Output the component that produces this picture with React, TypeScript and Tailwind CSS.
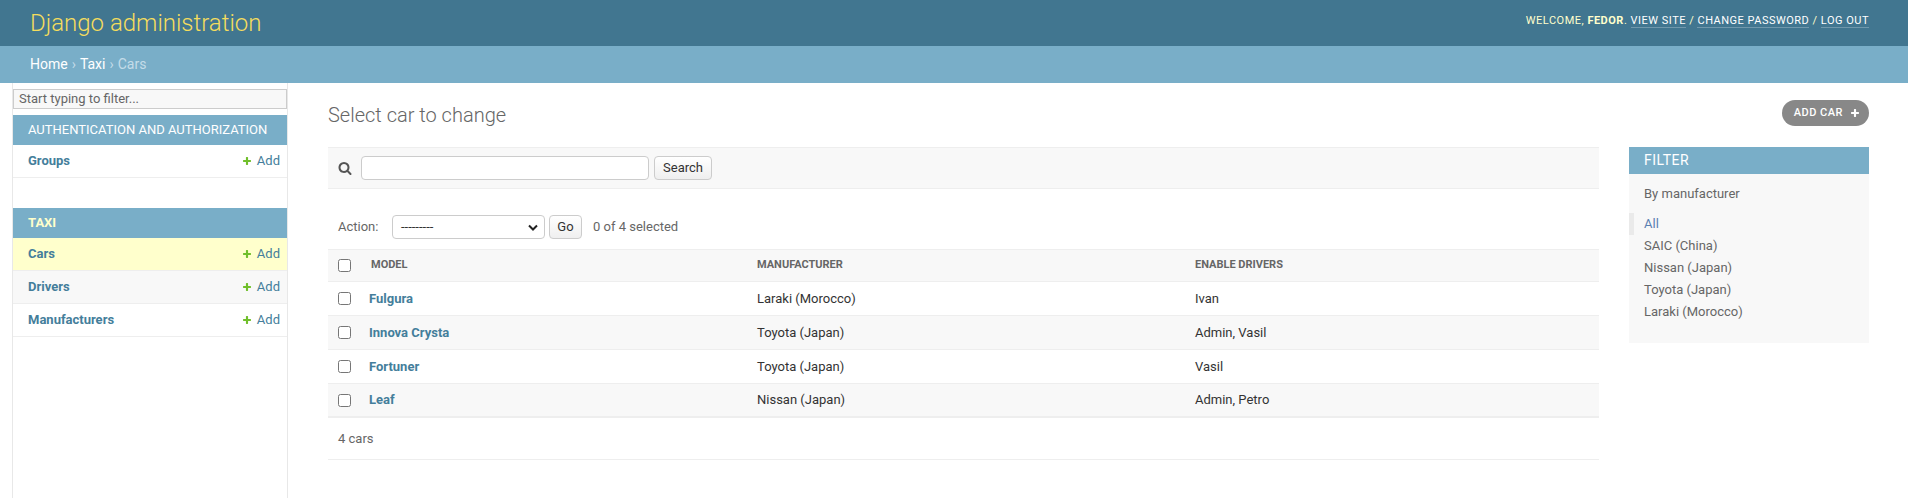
const PLUS =
  "M1600 796v192q0 40-28 68t-68 28h-416v416q0 40-28 68t-68 28h-192q-40 0-68-28t-28-68v-416h-416q-40 0-68-28t-28-68v-192q0-40 28-68t68-28h416v-416q0-40 28-68t68-28h192q40 0 68 28t28 68v416h416q40 0 68 28t28 68z";

function PlusIcon({ color, size = 10 }: { color: string; size?: number }) {
  return (
    <svg width={size} height={size} viewBox="0 0 1792 1792">
      <path d={PLUS} fill={color} />
    </svg>
  );
}

function SearchIcon() {
  return (
    <svg width="14" height="14" viewBox="0 0 1792 1792">
      <path
        fill="#555"
        d="M1216 832q0-185-131.5-316.5t-316.5-131.5-316.5 131.5-131.5 316.5 131.5 316.5 316.5 131.5 316.5-131.5 131.5-316.5zm512 832q0 52-38 90t-90 38q-54 0-90-38l-343-342q-179 124-399 124-143 0-273.5-55.5t-225-150-150-225-55.5-273.5 55.5-273.5 150-225 225-150 273.5-55.5 273.5 55.5 225 150 150 225 55.5 273.5q0 220-124 399l343 343q37 37 37 90z"
      />
    </svg>
  );
}

const cars = [
  { model: "Fulgura", manufacturer: "Laraki (Morocco)", drivers: "Ivan" },
  { model: "Innova Crysta", manufacturer: "Toyota (Japan)", drivers: "Admin, Vasil" },
  { model: "Fortuner", manufacturer: "Toyota (Japan)", drivers: "Vasil" },
  { model: "Leaf", manufacturer: "Nissan (Japan)", drivers: "Admin, Petro" },
];

const filters = ["SAIC (China)", "Nissan (Japan)", "Toyota (Japan)", "Laraki (Morocco)"];

function SidebarRow({ name, bg }: { name: string; bg: string }) {
  return (
    <div className={`flex h-[33px] items-center justify-between border-b border-[#eee] pl-[15px] pr-[7px] ${bg}`}>
      <span className="font-bold text-[#447e9b]">{name}</span>
      <span className="flex items-center gap-[5px] text-[#447e9b]">
        <PlusIcon color="#70bf2b" />
        Add
      </span>
    </div>
  );
}

const grid = "grid grid-cols-[31px_388px_438px_1fr] items-center pl-[10px]";

export default function App() {
  return (
    <div className="flex h-screen flex-col overflow-hidden bg-white font-['Roboto','Liberation_Sans',sans-serif] text-[13px] text-[#333]">
      {/* Header */}
      <header className="flex h-[46px] shrink-0 items-center justify-between bg-[#417690] pl-[30px] pr-[39px]">
        <h1 className="text-[24px] font-light leading-none text-[#f5dd5d]">Django administration</h1>
        <div className="mt-[-3px] text-[11px] uppercase tracking-[0.5px] text-[#ffc]">
          Welcome, <strong className="font-bold">Fedor</strong>.{" "}
          <a className="border-b border-white/25 text-white">View site</a> /{" "}
          <a className="border-b border-white/25 text-white">Change password</a> /{" "}
          <a className="border-b border-white/25 text-white">Log out</a>
        </div>
      </header>

      {/* Breadcrumbs */}
      <div className="flex h-[37px] shrink-0 items-center bg-[#79aec8] px-[30px] text-[14px] text-[#c4dce8]">
        <span className="text-white">Home</span>
        <span className="mx-[4px]">›</span>
        <span className="text-white">Taxi</span>
        <span className="mx-[4px]">›</span>
        Cars
      </div>

      <div className="flex min-h-0 flex-1">
        {/* Nav sidebar */}
        <nav className="ml-[12px] w-[276px] shrink-0 border-x border-[#e8e8e8]">
          <div className="mt-[6px] flex h-[20px] items-center border border-[#ccc] bg-[#f8f8f8] px-[5px] text-[#666]">
            Start typing to filter...
          </div>
          <div className="mt-[6px] flex h-[30px] items-center bg-[#79aec8] pl-[15px] uppercase text-white">
            Authentication and Authorization
          </div>
          <SidebarRow name="Groups" bg="bg-white" />
          <div className="mt-[30px] flex h-[30px] items-center bg-[#79aec8] pl-[15px] font-bold uppercase text-[#ffc]">
            Taxi
          </div>
          <SidebarRow name="Cars" bg="bg-[#ffc]" />
          <SidebarRow name="Drivers" bg="bg-[#f8f8f8]" />
          <SidebarRow name="Manufacturers" bg="bg-white" />
        </nav>

        {/* Content */}
        <main className="min-w-0 flex-1 pl-[40px] pr-[39px] pt-[17px]">
          <div className="flex items-start justify-between">
            <h1 className="mt-[3px] text-[20px] font-light leading-[24px] text-[#666]">Select car to change</h1>
            <a className="flex h-[26px] items-center gap-[7px] rounded-full bg-[#888] pl-[12px] pr-[9px] text-[11px] font-medium uppercase tracking-[0.5px] text-white">
              Add car
              <PlusIcon color="#fff" size={10} />
            </a>
          </div>

          <div className="mt-[20px] flex gap-[30px]">
            {/* Changelist */}
            <div className="min-w-0 flex-1">
              <div className="flex h-[42px] items-center border-y border-[#eee] bg-[#f8f8f8] pl-[10px]">
                <SearchIcon />
                <div className="ml-[9px] h-[24px] w-[288px] rounded-[4px] border border-[#ccc] bg-white" />
                <button className="ml-[5px] h-[24px] w-[58px] rounded-[4px] border border-[#ccc] bg-gradient-to-b from-white to-[#efefef] text-[13px] text-[#333]">
                  Search
                </button>
              </div>

              <div className="mt-[26px] flex h-[24px] items-center pl-[10px] text-[#666]">
                <span className="w-[54px]">Action:</span>
                <div className="flex h-[24px] w-[153px] items-center justify-between rounded-[4px] border border-[#ccc] bg-white pl-[8px] pr-[6px] text-[#333]">
                  ---------
                  <svg width="10" height="7" viewBox="0 0 10 7">
                    <path d="M1 1.5l4 4 4-4" fill="none" stroke="#222" strokeWidth="2" />
                  </svg>
                </div>
                <button className="ml-[4px] h-[24px] w-[33px] rounded-[4px] border border-[#ccc] bg-gradient-to-b from-white to-[#efefef] text-[13px] text-[#333]">
                  Go
                </button>
                <span className="ml-[11px]">0 of 4 selected</span>
              </div>

              <div className="mt-[10px] border-t border-[#eee]">
                <div className={`${grid} h-[32px] border-b border-[#eee] bg-[#f8f8f8] text-[11px] font-bold uppercase text-[#666]`}>
                  <input type="checkbox" className="m-0 h-[13px] w-[13px]" />
                  <span className="pl-[2px]">Model</span>
                  <span>Manufacturer</span>
                  <span>Enable drivers</span>
                </div>
                {cars.map((c, i) => (
                  <div
                    key={c.model}
                    className={`${grid} h-[34px] ${i === cars.length - 1 ? "border-b-2" : "border-b"} border-[#eee] ${
                      i % 2 === 1 ? "bg-[#f8f8f8]" : "bg-white"
                    }`}
                  >
                    <input type="checkbox" className="m-0 h-[13px] w-[13px]" />
                    <span className="font-bold text-[#447e9b]">{c.model}</span>
                    <span>{c.manufacturer}</span>
                    <span>{c.drivers}</span>
                  </div>
                ))}
              </div>

              <div className="flex h-[42px] items-center border-b border-[#eee] pl-[10px] text-[#666]">4 cars</div>
            </div>

            {/* Filter */}
            <div className="w-[240px] shrink-0 self-start bg-[#f8f8f8] pb-[20px]">
              <h2 className="flex h-[27px] items-center bg-[#79aec8] pl-[15px] text-[14px] uppercase tracking-[0.5px] text-white">
                Filter
              </h2>
              <h3 className="mt-[12px] pl-[15px] leading-[16px] text-[#666]">By manufacturer</h3>
              <ul className="mt-[11px]">
                <li className="border-l-[5px] border-[#eaeaea] pl-[10px] leading-[22px] text-[#5b80b2]">All</li>
                {filters.map((f) => (
                  <li key={f} className="pl-[15px] leading-[22px] text-[#666]">
                    {f}
                  </li>
                ))}
              </ul>
            </div>
          </div>
        </main>
      </div>
    </div>
  );
}
